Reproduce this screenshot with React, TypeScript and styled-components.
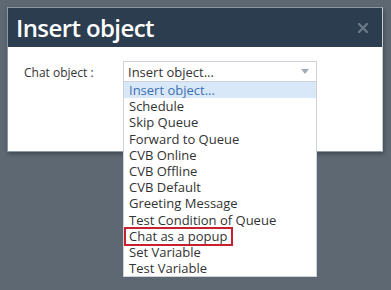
import * as React from 'react';
import styled, { createGlobalStyle } from 'styled-components';

const textColor = '#333';

const GlobalStyle = createGlobalStyle`
  html, body {
    margin: 0;
    padding: 0;
    background: #5d6873;
    font-family: "Open Sans", "Noto Sans", sans-serif;
  }
`;

const Page = styled.div`
  height: 290px;
  box-sizing: border-box;
  padding: 7px 8px 0 7px;
  overflow: hidden;
`;

const Dialog = styled.div`
  width: 376px;
  box-sizing: border-box;
  background: #fff;
  border: 1px solid #8e99a4;
  border-right-color: #c6ccd2;
  box-shadow: 1px 2px 4px rgba(0, 0, 0, .3);
`;

const Header = styled.div`
  height: 39px;
  display: flex;
  align-items: center;
  justify-content: space-between;
  padding: 0 14px 0 8px;
  background: #2b3d4f;
`;

const Title = styled.h1`
  margin: 0;
  font-size: 24px;
  font-weight: 600;
  letter-spacing: -0.6px;
  color: #fff;
  line-height: 1;
`;

const CloseIcon = styled.svg`
  display: block;
  width: 10px;
  height: 10px;
`;

const Body = styled.div`
  height: 104px;
  box-sizing: border-box;
  padding: 14px 16px;
`;

const FormRow = styled.div`
  display: flex;
  align-items: flex-start;
`;

const Label = styled.label`
  width: 99px;
  padding-top: 3px;
  font-size: 12px;
  color: ${textColor};
`;

const SelectWrap = styled.div`
  position: relative;
  width: 194px;
`;

const SelectBox = styled.div`
  height: 21px;
  box-sizing: border-box;
  display: flex;
  align-items: center;
  justify-content: space-between;
  padding: 0 6px 0 4px;
  border: 1px solid #cdd3d9;
  font-size: 13px;
  color: ${textColor};
`;

const Arrow = styled.span`
  width: 0;
  height: 0;
  border-left: 4px solid transparent;
  border-right: 4px solid transparent;
  border-top: 5px solid #a3acb5;
  margin-right: 1px;
`;

const List = styled.ul`
  position: absolute;
  top: 21px;
  left: 0;
  right: 0;
  margin: 0;
  padding: 0;
  list-style: none;
  background: #fff;
  border: 1px solid #cdd3d9;
  border-top: none;
  z-index: 2;
`;

const Option = styled.li<{ $active?: boolean }>`
  height: 16.2px;
  line-height: 16.2px;
  padding-left: 5px;
  font-size: 13px;
  white-space: nowrap;
  color: ${p => (p.$active ? '#3f70b2' : textColor)};
  background: ${p => (p.$active ? '#d9e8f8' : 'transparent')};
`;

const Marked = styled.span`
  display: inline-block;
  line-height: 15px;
  padding: 0 4px 0 3px;
  margin-left: -3px;
  outline: 2px solid #c8202f;
`;

const options = [
  'Insert object...',
  'Schedule',
  'Skip Queue',
  'Forward to Queue',
  'CVB Online',
  'CVB Offline',
  'CVB Default',
  'Greeting Message',
  'Test Condition of Queue',
  'Chat as a popup',
  'Set Variable',
  'Test Variable',
];

const App: React.FC = () => {
  return (
    <Page>
      <GlobalStyle />
      <Dialog>
        <Header>
          <Title>Insert object</Title>
          <CloseIcon viewBox="0 0 10 10">
            <path d="M1 1 L9 9 M9 1 L1 9" stroke="#6d7a87" strokeWidth="2.2" strokeLinecap="square" />
          </CloseIcon>
        </Header>
        <Body>
          <FormRow>
            <Label>Chat object :</Label>
            <SelectWrap>
              <SelectBox>
                <span>Insert object...</span>
                <Arrow />
              </SelectBox>
              <List>
                {options.map((name, i) => (
                  <Option key={name} $active={i === 0}>
                    {name === 'Chat as a popup' ? <Marked>{name}</Marked> : name}
                  </Option>
                ))}
              </List>
            </SelectWrap>
          </FormRow>
        </Body>
      </Dialog>
    </Page>
  );
};

export default App;
